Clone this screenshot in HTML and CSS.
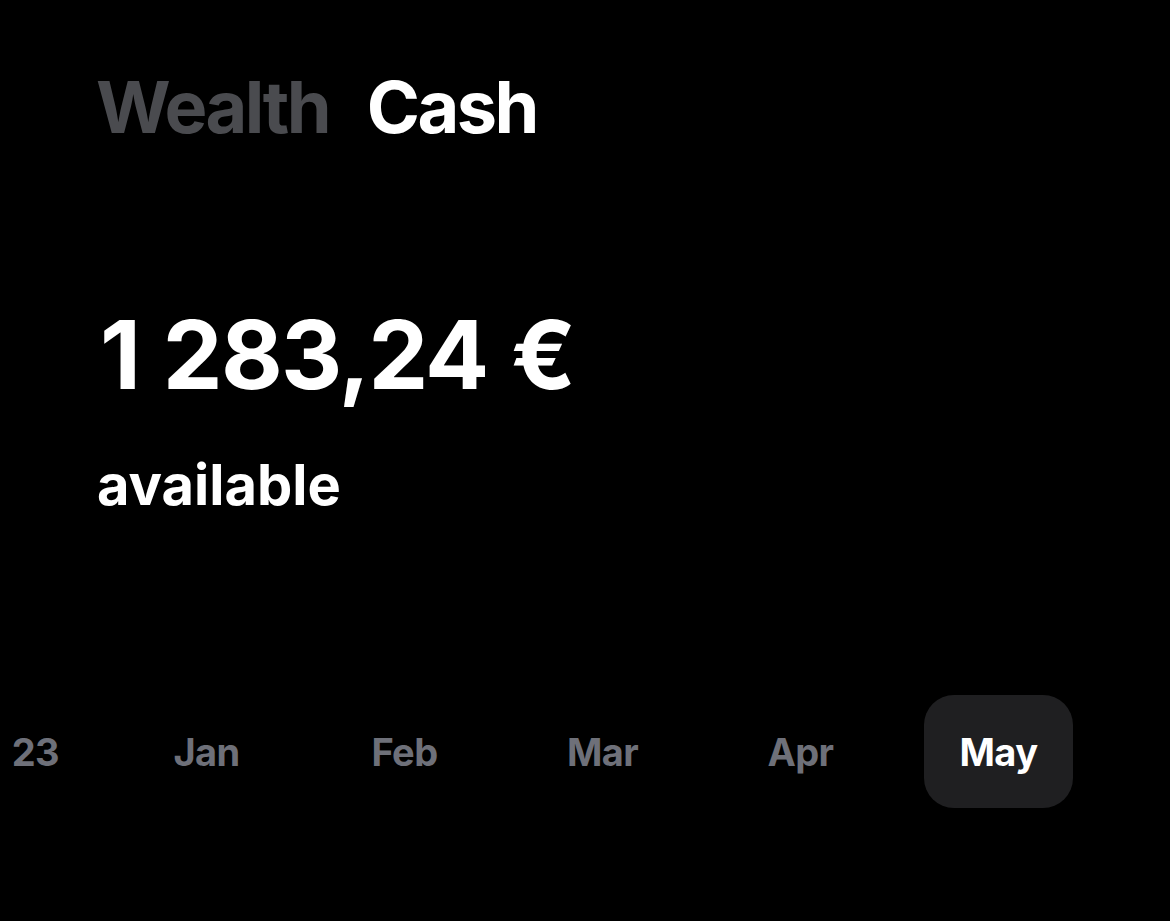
FILE: index.html
```html
<!DOCTYPE html>
<html>
<head>
<meta charset="utf-8">
<link rel="stylesheet" href="styles.css">
</head>
<body>
<div class="screen">
  <nav class="tabs">
    <span class="tab">Wealth</span>
    <span class="tab active">Cash</span>
  </nav>
  <section class="balance">
    <div class="amount">1 283,24 €</div>
    <div class="label">available</div>
  </section>
  <div class="months">
    <div class="month">Dec 23</div>
    <div class="month">Jan</div>
    <div class="month">Feb</div>
    <div class="month">Mar</div>
    <div class="month">Apr</div>
    <div class="month selected">May</div>
  </div>
</div>
</body>
</html>
```
FILE: styles.css
```css
html, body {
  margin: 0;
  padding: 0;
  background: #000;
}
body {
  font-family: Inter, "Noto Sans", sans-serif;
  color: #fff;
  width: 1170px;
  height: 921px;
  overflow: hidden;
}
.screen {
  display: flex;
  flex-direction: column;
}
.tabs {
  display: flex;
  gap: 38px;
  padding: 62px 0 0 96px;
}
.tab {
  font-size: 72px;
  font-weight: 700;
  line-height: 90px;
  letter-spacing: -2.6px;
  color: #4a4b4f;
}
.tab.active {
  color: #fff;
}
.balance {
  padding: 148px 0 0 100px;
  display: flex;
  flex-direction: column;
}
.amount {
  font-size: 95px;
  font-weight: 700;
  line-height: 110px;
  letter-spacing: -1.8px;
  word-spacing: 3px;
}
.label {
  font-size: 56px;
  font-weight: 700;
  line-height: 70px;
  margin-top: 40px;
  margin-left: -3px;
}
.months {
  display: flex;
  justify-content: flex-end;
  gap: 49px;
  width: 1073px;
  margin-top: 175px;
}
.month {
  flex: none;
  box-sizing: border-box;
  min-width: 149px;
  padding: 0 24px;
  height: 113px;
  display: flex;
  align-items: center;
  justify-content: center;
  font-size: 38px;
  font-weight: 700;
  letter-spacing: -0.6px;
  word-spacing: 8px;
  color: #6e7079;
  border-radius: 30px;
  white-space: nowrap;
}
.month.selected {
  background: #1f1f21;
  color: #fff;
}
```
